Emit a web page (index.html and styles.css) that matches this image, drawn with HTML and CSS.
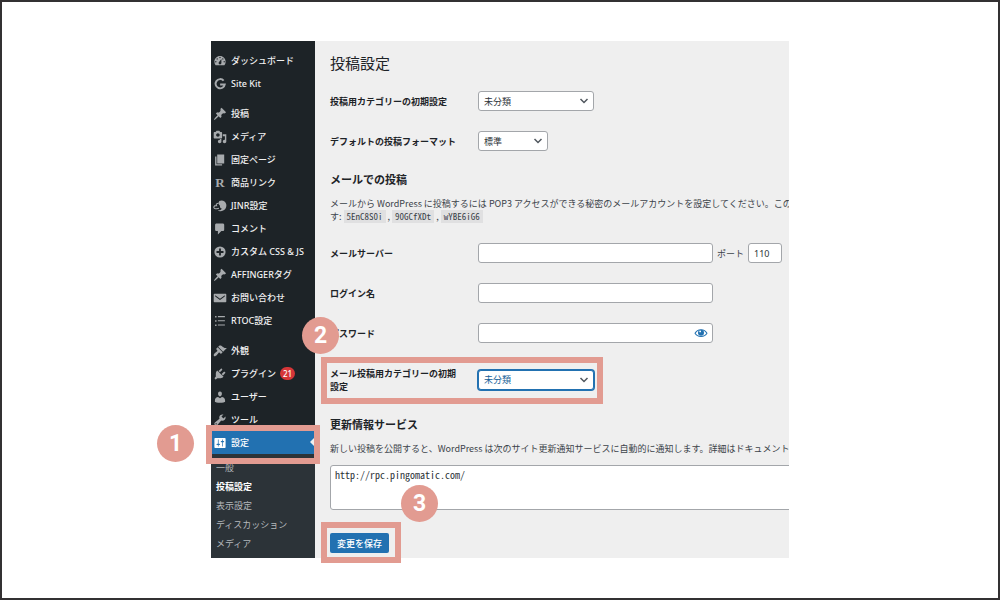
FILE: index.html
```html
<!DOCTYPE html>
<html lang="ja">
<head>
<meta charset="utf-8">
<title>投稿設定</title>
<link rel="stylesheet" href="styles.css">
</head>
<body>
<div class="frame">
  <div class="screen">
    <nav class="sidebar">
      <ul class="menu">
        <li><a class="item" href="#"><svg class="icon" viewBox="0 0 20 20"><path d="M3.76 16h12.48c1.1-1.37 1.76-3.11 1.76-5 0-4.42-3.58-8-8-8s-8 3.58-8 8c0 1.89.66 3.63 1.76 5zM10 4c.55 0 1 .45 1 1s-.45 1-1 1-1-.45-1-1 .45-1 1-1zM6 6c.55 0 1 .45 1 1s-.45 1-1 1-1-.45-1-1 .45-1 1-1zm8 0c.55 0 1 .45 1 1s-.45 1-1 1-1-.45-1-1 .45-1 1-1zm-5.37 5.55L12 7v6c0 1.1-.9 2-2 2s-2-.9-2-2c0-.57.24-1.08.63-1.45zM4 10c.55 0 1 .45 1 1s-.45 1-1 1-1-.45-1-1 .45-1 1-1zm12 0c.55 0 1 .45 1 1s-.45 1-1 1-1-.45-1-1 .45-1 1-1z" fill-rule="evenodd"/></svg>ダッシュボード</a></li>
        <li><a class="item" href="#"><svg class="icon line" viewBox="0 0 20 20"><path d="M15.2 5.2A6.6 6.6 0 1 0 16.8 10.6H10.2" stroke-width="2.8"/></svg>Site Kit</a></li>
      </ul>
      <ul class="menu">
        <li><a class="item" href="#"><svg class="icon" viewBox="0 0 20 20"><path d="M10.44 3.02l1.82-1.82 6.36 6.35-1.83 1.82c-1.05-.68-2.48-.57-3.41.36l-.75.75c-.92.93-1.04 2.35-.35 3.41l-1.83 1.82-2.41-2.41-2.8 2.79c-.42.42-3.38 2.71-3.8 2.29s1.86-3.39 2.28-3.81l2.79-2.79L4.1 9.36l1.83-1.82c1.05.69 2.48.57 3.4-.36l.75-.75c.93-.92 1.05-2.35.36-3.41z"/></svg>投稿</a></li>
        <li><a class="item" href="#"><svg class="icon" viewBox="0 0 20 20"><path fill-rule="evenodd" d="M13 11V4c0-.55-.45-1-1-1h-1.67L9 1H5L3.67 3H2c-.55 0-1 .45-1 1v7c0 .55.45 1 1 1h10c.55 0 1-.45 1-1zM7 4.5c1.38 0 2.5 1.12 2.5 2.5S8.38 9.5 7 9.5 4.5 8.38 4.5 7 5.62 4.5 7 4.5zM14 6h5v10.5c0 1.38-1.12 2.5-2.5 2.5S14 17.88 14 16.5s1.12-2.5 2.5-2.5c.17 0 .34.02.5.05V9h-3V6zm-4 8.05V13h2v3.5c0 1.38-1.12 2.5-2.5 2.5S7 17.88 7 16.5 8.12 14 9.5 14c.17 0 .34.02.5.05z"/></svg>メディア</a></li>
        <li><a class="item" href="#"><svg class="icon" viewBox="0 0 20 20"><path d="M6 15V2h10v13H6zm-1 1h8v2H3V5h2v11z"/></svg>固定ページ</a></li>
        <li><a class="item" href="#"><span class="icon letter" aria-hidden="true">R</span>商品リンク</a></li>
        <li><a class="item" href="#"><svg class="icon" viewBox="0 0 20 20"><path d="M9 3c4-2 9 0 10 5 .8 5-3 9.500-8 9.500-2 0-3-.5-4-1.500 3 .5 5-.5 5.500-2.500-2-.5-3-2-2.500-4C8 8 7 6 9 3z"/><path class="stroke" d="M8 6C5 6 4 8 5 9.500 1 9 0 12.500 2.500 13.500c2 .8 4 0 6-.3"/></svg>JINR設定</a></li>
        <li><a class="item" href="#"><svg class="icon" viewBox="0 0 20 20"><path d="M5 2h9c1.100 0 2 .9 2 2v7c0 1.100-.9 2-2 2h-2l-5 5v-5H5c-1.100 0-2-.9-2-2V4c0-1.100.9-2 2-2z"/></svg>コメント</a></li>
        <li><a class="item" href="#"><svg class="icon" viewBox="0 0 20 20"><path fill-rule="evenodd" d="M10 2a8 8 0 1 0 0 16 8 8 0 0 0 0-16zM8.700 5h2.600v3.700H15v2.600h-3.700V15H8.700v-3.700H5V8.700h3.700z"/></svg>カスタム CSS &amp; JS</a></li>
        <li><a class="item" href="#"><svg class="icon" viewBox="0 0 20 20"><path d="M10.44 3.02l1.82-1.82 6.36 6.35-1.83 1.82c-1.05-.68-2.48-.57-3.41.36l-.75.75c-.92.93-1.04 2.35-.35 3.41l-1.83 1.82-2.41-2.41-2.8 2.79c-.42.42-3.38 2.71-3.8 2.29s1.86-3.39 2.28-3.81l2.79-2.79L4.1 9.36l1.83-1.82c1.05.69 2.48.57 3.4-.36l.75-.75c.93-.92 1.05-2.35.36-3.41z"/></svg>AFFINGERタグ</a></li>
        <li><a class="item" href="#"><svg class="icon" viewBox="0 0 20 20"><path fill-rule="evenodd" d="M2 4h16c.6 0 1 .4 1 1v10c0 .6-.4 1-1 1H2c-.6 0-1-.4-1-1V5c0-.6.4-1 1-1zM3.200 6v2L10 13l6.800-5V6L10 11z"/></svg>お問い合わせ</a></li>
        <li><a class="item" href="#"><svg class="icon" viewBox="0 0 20 20"><path d="M3 3h2v2H3zM7 3h10v1.500H7zM3 9h2v2H3zM7 9h10v1.500H7zM3 15h2v2H3zM7 15h10v1.500H7z"/></svg>RTOC設定</a></li>
      </ul>
      <ul class="menu">
        <li><a class="item" href="#"><svg class="icon" viewBox="0 0 20 20"><path d="M14.48 11.06L7.41 3.99l1.5-1.5c.5-.56 2.3-.47 3.51.32 1.21.8 1.43 1.28 2.91 2.1 1.18.64 2.45 1.26 4.45.85zm-.71.71L6.7 4.7 4.93 6.47c-.39.39-.39 1.02 0 1.41l1.06 1.06c.39.39.39 1.03 0 1.42-.6.6-1.43 1.11-2.21 1.69-.35.26-.7.53-1.01.84C1.43 14.23.4 16.08 1.4 17.07c.99 1 2.84-.03 4.18-1.36.31-.31.58-.66.85-1.02.57-.78 1.08-1.61 1.69-2.21.39-.39 1.02-.39 1.41 0l1.06 1.06c.39.39 1.02.39 1.41 0z"/></svg>外観</a></li>
        <li><a class="item" href="#"><svg class="icon" viewBox="0 0 20 20"><path d="M13.11 4.36L9.87 7.6 8 5.73l3.24-3.24c.35-.34 1.05-.2 1.56.32.52.51.66 1.21.31 1.55zm-8 1.77l.91-1.12 9.01 9.01-1.19.84c-.71.71-2.63 1.16-3.82 1.16H6.14L4.9 17.26c-.59.59-1.54.59-2.12 0-.59-.58-.59-1.53 0-2.12l1.24-1.24v-3.88c0-1.13.4-3.19 1.09-3.89zm7.26 3.97l3.24-3.24c.34-.35 1.04-.21 1.55.31.52.51.66 1.21.31 1.55l-3.24 3.25z"/></svg>プラグイン<span class="count">21</span></a></li>
        <li><a class="item" href="#"><svg class="icon" viewBox="0 0 20 20"><path d="M10 9.25c-2.27 0-2.73-3.44-2.73-3.44C7 4.02 7.82 2 9.97 2c2.16 0 2.98 2.02 2.71 3.81 0 0-.41 3.44-2.68 3.44zm0 2.57L12.72 10c2.39 0 4.52 2.33 4.52 4.53v2.49s-3.65 1.13-7.24 1.13c-3.65 0-7.24-1.13-7.24-1.13v-2.49c0-2.25 1.94-4.48 4.47-4.48z"/></svg>ユーザー</a></li>
        <li><a class="item" href="#"><svg class="icon" viewBox="0 0 20 20"><path fill-rule="evenodd" d="M16.68 9.77c-1.34 1.34-3.3 1.67-4.95.99l-5.41 6.52c-.99.99-2.59.99-3.58 0s-.99-2.59 0-3.57l6.52-5.42c-.68-1.65-.35-3.61.99-4.95 1.28-1.28 3.12-1.62 4.72-1.06l-2.89 2.89 2.82 2.82 2.86-2.87c.53 1.58.18 3.39-1.08 4.65zM3.81 16.21c.4.39 1.04.39 1.43 0 .4-.4.4-1.04 0-1.43-.39-.4-1.03-.4-1.43 0-.39.39-.39 1.03 0 1.43z"/></svg>ツール</a></li>
        <li><a class="item current" href="#"><svg class="icon" viewBox="0 0 20 20"><path fill-rule="evenodd" d="M18 16V4c0-.55-.45-1-1-1H3c-.55 0-1 .45-1 1v12c0 .55.45 1 1 1h14c.55 0 1-.45 1-1zM8 11h1c.55 0 1 .45 1 1s-.45 1-1 1H8v1.5c0 .28-.22.5-.5.5s-.5-.22-.5-.5V13H6c-.55 0-1-.45-1-1s.45-1 1-1h1V5.5c0-.28.22-.5.5-.5s.5.22.5.5V11zm5-2h-1c-.55 0-1-.45-1-1s.45-1 1-1h1V5.5c0-.28.22-.5.5-.5s.5.22.5.5V7h1c.55 0 1 .45 1 1s-.45 1-1 1h-1v5.5c0 .28-.22.5-.5.5s-.5-.22-.5-.5V9z"/></svg>設定</a></li>
      </ul>
      <ul class="submenu">
        <li><a href="#">一般</a></li>
        <li><a class="here" href="#">投稿設定</a></li>
        <li><a href="#">表示設定</a></li>
        <li><a href="#">ディスカッション</a></li>
        <li><a href="#">メディア</a></li>
        <li><a href="#">パーマリンク</a></li>
      </ul>
    </nav>

    <main class="content">
      <form>
        <h1>投稿設定</h1>
        <div class="row">
          <label for="category">投稿用カテゴリーの初期設定</label>
          <div class="field"><span class="picker wide"><select id="category"><option>未分類</option></select><svg class="chevron" viewBox="0 0 10 10"><path d="M1.500 3 5 6.500 8.500 3"/></svg></span></div>
        </div>
        <div class="row">
          <label for="format">デフォルトの投稿フォーマット</label>
          <div class="field"><span class="picker narrow"><select id="format"><option>標準</option></select><svg class="chevron" viewBox="0 0 10 10"><path d="M1.500 3 5 6.500 8.500 3"/></svg></span></div>
        </div>

        <h2>メールでの投稿</h2>
        <div class="note">
          <p>メールから WordPress に投稿するには POP3 アクセスができる秘密のメールアカウントを設定してください。このアド</p>
          <p>す: <code>5EnC8S0i</code> , <code>90GCfXDt</code> , <code>wYBE6iG6</code></p>
        </div>
        <div class="row">
          <label for="server">メールサーバー</label>
          <div class="field"><input class="text" id="server" type="text"><label class="port-label" for="port">ポート</label><input class="port" id="port" type="text" value="110"></div>
        </div>
        <div class="row">
          <label for="login">ログイン名</label>
          <div class="field"><input class="text" id="login" type="text"></div>
        </div>
        <div class="row">
          <label for="password">パスワード</label>
          <div class="field"><span class="secret"><input class="text" id="password" type="password"><button class="reveal" type="button" aria-label="パスワードを表示"><svg viewBox="0 0 20 14"><path class="lid" d="M1.500 7.500C5 .5 15 .5 18.500 7.500 15 13.500 5 13.500 1.500 7.500z"/><circle cx="10" cy="6.500" r="4.300"/><circle class="glint" cx="8.800" cy="4.800" r="1.300"/></svg></button></span></div>
        </div>
        <div class="row tall">
          <label for="mail-category">メール投稿用カテゴリーの初期設定</label>
          <div class="field"><span class="picker wide"><select class="focused" id="mail-category"><option>未分類</option></select><svg class="chevron" viewBox="0 0 10 10"><path d="M1.500 3 5 6.500 8.500 3"/></svg></span></div>
        </div>

        <h2><label for="ping">更新情報サービス</label></h2>
        <div class="note">
          <p>新しい投稿を公開すると、WordPress は次のサイト更新通知サービスに自動的に通知します。詳細はドキュメントの <a href="#">更</a></p>
        </div>
        <textarea id="ping">http://rpc.pingomatic.com/</textarea>
        <button class="save" type="button">変更を保存</button>
      </form>
    </main>

    <span class="mark mark-menu"></span>
    <span class="mark mark-category"></span>
    <span class="mark mark-save"></span>
    <span class="step step-one">1</span>
    <span class="step step-two">2</span>
    <span class="step step-three">3</span>
  </div>
</div>
</body>
</html>
```

FILE: styles.css
```css
* {
  box-sizing: border-box;
}

body {
  margin: 0;
  background: #fff;
  color: #3c434a;
  font: 9px/13px "Noto Sans", "Noto Sans CJK JP", sans-serif;
}

h1, h2, p, ul {
  margin: 0;
  padding: 0;
}

ul {
  list-style: none;
}

input, select, textarea, button {
  margin: 0;
  font: inherit;
  color: #2c3338;
}

.frame {
  min-height: 100vh;
  padding: 39px 16px;
  border: 2px solid #333132;
}

.screen {
  position: relative;
  display: grid;
  grid-template-columns: 104px minmax(0, 1fr);
  max-width: 578px;
  margin: 0 auto;
  background: #efefef;
}

/* Sidebar: as tall as the form, anything further is cut off */
.sidebar {
  display: flex;
  flex-direction: column;
  gap: 7px;
  height: 0;
  min-height: 100%;
  padding-top: 8px;
  overflow: hidden;
  background: #1d2327;
}

.item {
  position: relative;
  display: flex;
  align-items: center;
  gap: 4px;
  height: 23px;
  padding-left: 2px;
  color: #f0f0f1;
  font-weight: 500;
  text-decoration: none;
  white-space: nowrap;
}

.icon {
  flex: none;
  width: 14px;
  height: 14px;
  fill: #a7aaad;
}

.icon.line {
  fill: none;
  stroke: #a7aaad;
}

.icon .stroke {
  fill: none;
  stroke: #a7aaad;
  stroke-width: 1.5;
}

.letter {
  color: #a7aaad;
  font: bold 13px/14px "Liberation Serif", serif;
  text-align: center;
}

.count {
  padding: 0 3px;
  border-radius: 7px;
  background: #d63638;
  color: #fff;
  font-size: 8px;
}

.current {
  background: #2271b1;
  color: #fff;
}

.current .icon {
  fill: #fff;
}

.current::after {
  content: "";
  position: absolute;
  top: 6px;
  right: 0;
  border: 5px solid transparent;
  border-left-width: 0;
  border-right-color: #efefef;
}

.submenu {
  flex: 1 0 auto;
  margin-top: -7px;
  padding: 4px 0 0 5px;
  background: #2c3338;
}

.submenu a {
  display: block;
  color: #b4b8bc;
  line-height: 19px;
  text-decoration: none;
  white-space: nowrap;
}

.submenu .here {
  color: #fff;
  font-weight: 700;
}

/* Settings form */
.content {
  min-width: 0;
  padding: 11px 0 5px 15px;
  overflow: hidden;
}

h1 {
  margin-bottom: 7px;
  color: #1d2327;
  font-size: 15px;
  font-weight: 400;
  line-height: 22px;
}

h2 {
  margin: 11px 0 9px;
  color: #1d2327;
  font-size: 11px;
  font-weight: 700;
  line-height: 16px;
}

.row {
  display: grid;
  grid-template-columns: 133px minmax(0, 1fr);
  column-gap: 15px;
  align-items: center;
  min-height: 40px;
}

.row.tall {
  min-height: 53px;
}

.row > label {
  color: #1d2327;
  font-weight: 700;
}

.field {
  display: flex;
  align-items: center;
}

.text, .port, select {
  height: 20px;
  padding: 0 5px;
  border: 1px solid #a3a6aa;
  border-radius: 3px;
  background: #fff;
}

.text {
  width: 235px;
}

.port {
  width: 34px;
}

.port-label {
  margin: 0 4px;
}

.picker, .secret {
  position: relative;
  display: block;
}

.wide {
  width: 116px;
}

.narrow {
  width: 70px;
}

select {
  appearance: none;
  display: block;
  width: 100%;
}

select.focused {
  border-color: #2271b1;
  box-shadow: 0 0 0 1px #2271b1;
  color: #135e96;
}

.chevron {
  position: absolute;
  top: 5px;
  right: 5px;
  width: 10px;
  height: 10px;
  fill: none;
  stroke: #50575e;
  stroke-width: 1.5;
  pointer-events: none;
}

.reveal {
  position: absolute;
  top: 0;
  right: 0;
  display: flex;
  align-items: center;
  justify-content: center;
  width: 25px;
  height: 20px;
  padding: 0;
  border: 0;
  background: none;
}

.reveal svg {
  width: 14px;
  height: 10px;
  fill: #2271b1;
}

.reveal .lid {
  fill: none;
  stroke: #2271b1;
  stroke-width: 1.5;
}

.reveal .glint {
  fill: #fff;
}

.note {
  margin-bottom: 10px;
  font-family: "Noto Sans CJK JP", sans-serif;
  white-space: nowrap;
}

.note a {
  color: #2271b1;
}

code {
  padding: 0 3px;
  background: #e0e0e1;
  font: 9px/12px "Noto Sans Mono CJK JP", "DejaVu Sans Mono", monospace;
}

textarea {
  display: block;
  width: calc(100% + 8px);
  height: 45px;
  padding: 2px 4px;
  border: 1px solid #a3a6aa;
  border-radius: 3px;
  background: #fff;
  font: 10px/14px "Noto Sans Mono CJK JP", "DejaVu Sans Mono", monospace;
  resize: none;
}

.save {
  display: block;
  height: 20px;
  margin-top: 23px;
  padding: 0 7px;
  border: 0;
  border-radius: 2px;
  background: #2271b1;
  color: #fff;
  font-weight: 500;
}

/* Tutorial marks laid over the screen */
.mark {
  position: absolute;
  border: 6px solid #e29b91;
  pointer-events: none;
}

.mark-menu {
  top: 384px;
  left: -5px;
  width: 114px;
  height: 39px;
}

.mark-category {
  top: 316px;
  left: 110px;
  width: 282px;
  height: 47px;
}

.mark-save {
  top: 481px;
  left: 110px;
  width: 80px;
  height: 41px;
}

.step {
  position: absolute;
  width: 37px;
  height: 37px;
  border-radius: 50%;
  background: #e29b91;
  color: #fff;
  font: 700 23px/37px Roboto, sans-serif;
  text-align: center;
}

.step-one {
  top: 384px;
  left: -54px;
}

.step-two {
  top: 276px;
  left: 91px;
}

.step-three {
  top: 444px;
  left: 190px;
}
```
